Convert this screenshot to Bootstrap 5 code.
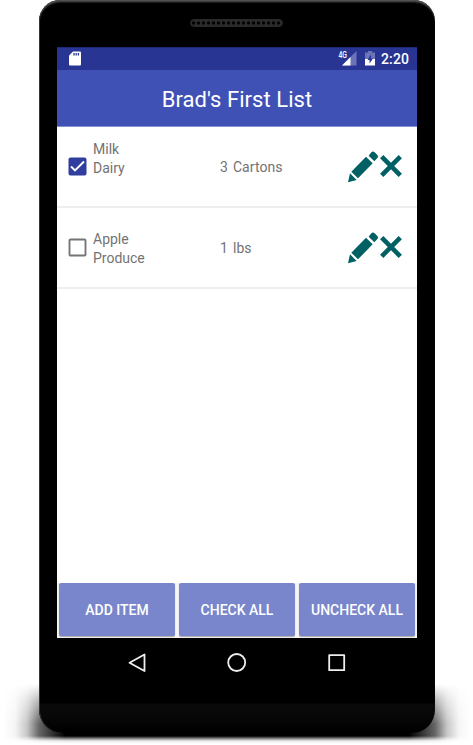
<!DOCTYPE html>
<html lang="en">
<head>
<meta charset="utf-8">
<meta name="viewport" content="width=device-width, initial-scale=1">
<title>Brad's First List</title>
<link href="https://cdn.jsdelivr.net/npm/bootstrap@5.3.0/dist/css/bootstrap.min.css" rel="stylesheet">
<style>
body{font-family:Roboto,"Liberation Sans",sans-serif;background:#fff;height:745px;overflow:hidden}
.stage{height:745px;padding-left:38.500px}
.phone{width:396.500px;height:733px;padding:0 18px 0 18.500px;border-radius:21px 21px 23px 23px;background:linear-gradient(#000 703px,#090909 704px,#080808 716px,#000 731px);box-shadow:inset 0 3px 2px -1px #555,inset 1px 0 0 #333;z-index:1}
.ground{left:3px;top:684px;width:468px;height:60px;background:linear-gradient(90deg,transparent,rgba(0,0,0,.04) 12px,rgba(0,0,0,.22) 24px,rgba(0,0,0,.6) 36px,#000 62px,#000 406px,rgba(0,0,0,.6) 432px,rgba(0,0,0,.22) 444px,rgba(0,0,0,.04) 456px,transparent);-webkit-mask-image:linear-gradient(transparent,rgba(0,0,0,.45) 16px,#000 40px,#000 52px,rgba(0,0,0,.4) 55px,rgba(0,0,0,.08) 57px,transparent);mask-image:linear-gradient(transparent,rgba(0,0,0,.45) 16px,#000 40px,#000 52px,rgba(0,0,0,.4) 55px,rgba(0,0,0,.08) 57px,transparent)}
.top-bezel{height:47px}
.speaker{width:93px;height:8px;margin:-1px 1px 0 0;border:1px solid #292929;border-radius:5px;background:radial-gradient(circle,#000 1.2px,#2a2a2a 2px) 0 0/5px 6px}
.screen{height:591px;background:#fff}
.status{height:23px;background:#283593;padding:0 8px 0 12px;color:#fff;box-shadow:inset 0 1px #202a78}
.clock{font-size:14px;font-weight:500;line-height:24px;padding-top:1px;margin-left:6px;letter-spacing:.1px}
.title-bar{height:57px;background:#3f51b5;border-bottom:1px solid #8791d0;margin:0;color:#fff;font-size:22px;font-weight:400;line-height:56px;padding-top:2px;letter-spacing:.05px}
.item{height:81px;border-bottom:2px solid #eee;color:#737373;font-size:14px;line-height:19px;padding-left:11px}
.item-name{width:127px;margin-left:6px;padding-top:13px}
.item-name.low{padding-top:22px}
.qty{width:128px;padding-top:31px;word-spacing:1.5px;letter-spacing:.05px}
.check-icon{margin-top:30px}
.pencil{margin-top:24px}
.cross{margin:28px 0 0 2px}
.actions{height:55px;padding:0 2px 2px;gap:4px;background:#f5f5f5}
.action{height:53px;padding:2px 0 0;border:0;border-radius:2px;background:#7986cb;color:#fff;font-size:14px;font-weight:500;box-shadow:0 1px 1px #aaa;white-space:nowrap}
.nav-keys{height:49px}
</style>
<script src="https://cdn.jsdelivr.net/npm/bootstrap@5.3.0/dist/js/bootstrap.bundle.min.js"></script>
</head>
<body>
<svg class="d-none">
<symbol id="pencil" viewBox="0 0 90 94"><path fill="#006064" d="M62 13 70 3Q75-2 80 3L88 11Q92 16 88 20L79 30ZM54 16 74 36 30 81 10 61ZM6 66 26 86 0 93Z"/></symbol>
<symbol id="cross" viewBox="0 0 22 22"><path stroke="#006064" stroke-width="4.600" d="M1.700 1.700 20.300 20.300M20.300 1.700 1.700 20.300"/></symbol>
</svg>
<main class="stage position-relative">
<div class="ground position-absolute"></div>
<div class="phone position-relative">
  <div class="top-bezel d-flex align-items-center justify-content-center"><div class="speaker"></div></div>
  <div class="screen d-flex flex-column">
    <div class="status d-flex align-items-center">
      <svg width="12" height="15" viewBox="0 0 12 15"><path fill="#fff" d="M4 .5h7q1 0 1 1v12q0 1-1 1H1q-1 0-1-1V4.500Z"/><path stroke="#283593" stroke-width="1.300" d="M5 2v2.500M7.200 2v2.500M9.400 2v2.500"/></svg>
      <svg class="ms-auto" width="19" height="15" viewBox="0 0 19 15"><path fill="#6b74b5" d="M18.500 0v14.500H4Z"/><path fill="#fff" d="M12.500 6V14.500H4Z"/><path d="M0 0h9.500v7H0Z" fill="#283593"/><text x="0.500" y="6.700" fill="#fff" font-size="8.500" font-weight="500" textLength="8.500" lengthAdjust="spacingAndGlyphs">4G</text></svg>
      <svg class="ms-2" width="10" height="15" viewBox="0 0 10 15"><path fill="#6b74b5" d="M3 0h4v1.500h3V8H0V1.500h3Z"/><path fill="#fff" d="M0 8h10v6.500H0Z"/><path fill="#283593" d="M6 3.500 2.500 9h2v3.500L8 7.500H6Z"/></svg>
      <span class="clock">2:20</span>
    </div>
    <h1 class="title-bar text-center">Brad's First List</h1>
    <div class="item d-flex align-items-start">
      <svg class="check-icon" width="19" height="19" viewBox="0 0 19 19"><rect x=".5" y=".5" width="18" height="18" rx="2" fill="#303f9f"/><path fill="none" stroke="#fff" stroke-width="1.900" d="m3 9.500 4 4 9-9"/></svg>
      <div class="item-name">Milk<br>Dairy</div><div class="qty">3 Cartons</div>
      <svg class="pencil" width="30" height="32"><use href="#pencil"/></svg><svg class="cross" width="22" height="22"><use href="#cross"/></svg>
    </div>
    <div class="item d-flex align-items-start">
      <svg class="check-icon" width="19" height="19" viewBox="0 0 19 19"><rect x="1.500" y="1.500" width="16" height="16" rx="1" fill="none" stroke="#757575" stroke-width="1.900"/></svg>
      <div class="item-name low">Apple<br>Produce</div><div class="qty">1 lbs</div>
      <svg class="pencil" width="30" height="32"><use href="#pencil"/></svg><svg class="cross" width="22" height="22"><use href="#cross"/></svg>
    </div>
    <div class="actions d-flex mt-auto">
      <button class="btn action col" type="button">ADD ITEM</button>
      <button class="btn action col" type="button">CHECK ALL</button>
      <button class="btn action col" type="button">UNCHECK ALL</button>
    </div>
  </div>
  <svg class="nav-keys d-block" width="360" height="49" viewBox="0 0 360 49"><g fill="none" stroke="#eee" stroke-width="1.800" stroke-linejoin="round"><path d="M87.500 16.500v16.500L72.500 24.700Z"/><circle cx="179.700" cy="24.500" r="8.500"/><rect x="272.200" y="17.200" width="15" height="15"/></g></svg>
</div>
</main>
</body>
</html>
